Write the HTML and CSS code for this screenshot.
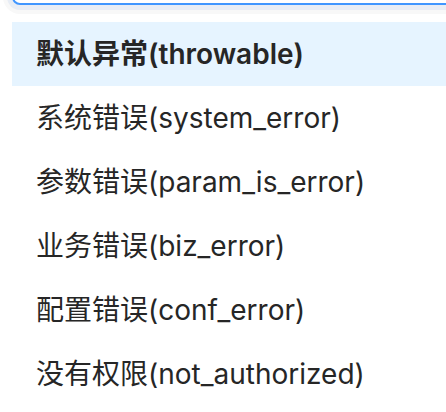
FILE: index.html
```html
<!DOCTYPE html>
<html lang="zh">
<head>
<meta charset="utf-8">
<link rel="stylesheet" href="styles.css">
</head>
<body>
<div class="select"></div>
<div class="dropdown">
  <ul class="options">
    <li class="option active">默认异常(throwable)</li>
    <li class="option">系统错误(system_error)</li>
    <li class="option">参数错误(param_is_error)</li>
    <li class="option">业务错误(biz_error)</li>
    <li class="option">配置错误(conf_error)</li>
    <li class="option">没有权限(not_authorized)</li>
  </ul>
</div>
</body>
</html>
```
FILE: styles.css
```css
html, body {
  margin: 0;
  padding: 0;
  background: #fff;
  overflow: hidden;
  width: 446px;
  height: 412px;
}
body {
  font-family: "Inter", "Noto Sans CJK SC", sans-serif;
  color: #262626;
}
.select {
  margin: -42px -20px 0 12px;
  height: 43px;
  border: 2px solid #4096ff;
  border-radius: 8px;
  box-shadow: 0 0 0 5px #e8edf5, 0 0 0 9px #f8f8f8;
  background: #fff;
}
.dropdown {
  margin: 17px -20px 0 12px;
  background: #fff;
}
.options {
  list-style: none;
  margin: 0;
  padding: 0;
}
.option {
  height: 64px;
  line-height: 64px;
  padding-left: 24px;
  font-size: 28px;
  white-space: nowrap;
}
.option.active {
  background: #e6f4ff;
  font-weight: 600;
}
```
